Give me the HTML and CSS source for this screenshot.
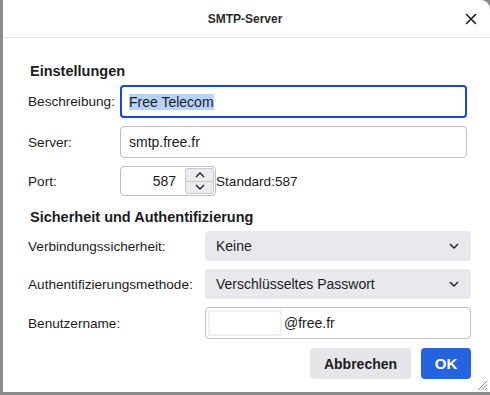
FILE: index.html
```html
<!DOCTYPE html>
<html lang="de">
<head>
    <meta charset="UTF-8">
    <meta name="viewport" content="width=device-width, initial-scale=1.0">
    <title>SMTP-Server</title>
    <link rel="stylesheet" href="styles.css">
</head>
<body>
    <div class="fenster">
        <div class="titelleiste">
            <span class="titel">SMTP-Server</span>
            <svg class="schliessen" width="12" height="12" viewBox="0 0 12 12">
                <path d="M1.5 1.5 L10.5 10.5 M10.5 1.5 L1.5 10.5" stroke="#1c1b22" stroke-width="1.6" stroke-linecap="round"/>
            </svg>
        </div>
        <div class="inhalt">
            <h2 class="abschnitt">Einstellungen</h2>
            <div class="raster raster-eins">
                <label>Beschreibung:</label>
                <div class="feld fokus"><span class="markiert">Free Telecom</span></div>
                <label>Server:</label>
                <div class="feld">smtp.free.fr</div>
                <label>Port:</label>
                <div class="port-zeile">
                    <div class="port">
                        <span class="port-wert">587</span>
                        <div class="spinner">
                            <div class="pfeil">
                                <svg width="10" height="6" viewBox="0 0 10 6"><path d="M1 5 L5 1 L9 5" fill="none" stroke="#1c1b22" stroke-width="1.3"/></svg>
                            </div>
                            <div class="pfeil">
                                <svg width="10" height="6" viewBox="0 0 10 6"><path d="M1 1 L5 5 L9 1" fill="none" stroke="#1c1b22" stroke-width="1.3"/></svg>
                            </div>
                        </div>
                    </div>
                    <span>Standard:587</span>
                </div>
            </div>

            <h2 class="abschnitt zwei">Sicherheit und Authentifizierung</h2>
            <div class="raster raster-zwei">
                <label>Verbindungssicherheit:</label>
                <div class="auswahl">
                    <span>Keine</span>
                    <svg width="10" height="6" viewBox="0 0 10 6"><path d="M1 1 L5 5 L9 1" fill="none" stroke="#1c1b22" stroke-width="1.4"/></svg>
                </div>
                <label>Authentifizierungsmethode:</label>
                <div class="auswahl">
                    <span>Verschlüsseltes Passwort</span>
                    <svg width="10" height="6" viewBox="0 0 10 6"><path d="M1 1 L5 5 L9 1" fill="none" stroke="#1c1b22" stroke-width="1.4"/></svg>
                </div>
                <label>Benutzername:</label>
                <div class="benutzer">
                    <div class="benutzer-eingabe"></div>
                    <span>@free.fr</span>
                </div>
            </div>

            <div class="knoepfe">
                <button class="knopf">Abbrechen</button>
                <button class="knopf ok">OK</button>
            </div>
        </div>
        <svg class="griff" width="11" height="11" viewBox="0 0 11 11">
            <path d="M10 1 L1 10 M10 4.5 L4.5 10 M10 8 L8 10" stroke="#8a8a8a" stroke-width="1"/>
        </svg>
    </div>
</body>
</html>
```

FILE: styles.css
```css
html, body
{
    margin: 0;
    padding: 0;
}

body
{
    width: 490px;
    height: 395px;
    background: #8c8c8c;
    font-family: "Liberation Sans", Arial, sans-serif;
    font-size: 13.6px;
    color: #1c1b22;
    overflow: hidden;
}

.fenster
{
    position: relative;
    margin-left: 3px;
    width: 487px;
    height: 392px;
    background: #ffffff;
    border-top-right-radius: 9px;
    display: flex;
    flex-direction: column;
}

.titelleiste
{
    position: relative;
    height: 37px;
    border-bottom: 1px solid #e3e3e3;
    display: flex;
    align-items: center;
    justify-content: center;
}

.titel
{
    font-size: 12px;
    font-weight: bold;
    color: #2a2a2a;
    margin-left: -3px;
}

.schliessen
{
    position: absolute;
    right: 13px;
    top: 13px;
}

.inhalt
{
    padding: 24px 19px 0 25px;
}

.abschnitt
{
    margin: 0 0 5px 2px;
    font-size: 14.5px;
    line-height: 18px;
    font-weight: bold;
}

.abschnitt.zwei
{
    margin-top: 12px;
}

.raster
{
    display: grid;
    row-gap: 8px;
    align-items: center;
}

.raster-eins
{
    grid-template-columns: 92px 1fr;
    grid-template-rows: 33px 32px 30px;
    margin-right: 4px;
}

.raster-zwei
{
    grid-template-columns: 177px 1fr;
    grid-template-rows: 30px 30px 32px;
}

.feld
{
    height: 100%;
    box-sizing: border-box;
    border: 1px solid #bdbdc2;
    border-radius: 4px;
    padding: 0 8px;
    display: flex;
    align-items: center;
    font-size: 14px;
}

.feld.fokus
{
    border: 2px solid #1747d8;
    padding: 0 7px;
}

.markiert
{
    background: #b5d3fb;
}

.port-zeile
{
    display: flex;
    align-items: center;
    height: 100%;
}

.port
{
    width: 96px;
    height: 100%;
    box-sizing: border-box;
    border: 1px solid #bdbdc2;
    border-radius: 4px;
    display: flex;
    align-items: stretch;
    font-size: 14px;
}

.port-wert
{
    flex: 1;
    text-align: right;
    padding-right: 9px;
    align-self: center;
}

.spinner
{
    width: 27px;
    margin: 1px 1px 1px 0;
    border: 1px solid #c6c6cb;
    border-radius: 3px;
    background: #ececef;
    display: flex;
    flex-direction: column;
}

.pfeil
{
    flex: 1;
    display: flex;
    align-items: center;
    justify-content: center;
}

.pfeil + .pfeil
{
    border-top: 1px solid #c6c6cb;
}

.auswahl
{
    height: 100%;
    box-sizing: border-box;
    background: #e9e9ed;
    border-radius: 4px;
    padding: 0 12px 0 11px;
    display: flex;
    align-items: center;
    justify-content: space-between;
    font-size: 14px;
}

.benutzer
{
    height: 100%;
    box-sizing: border-box;
    border: 1px solid #bdbdc2;
    border-radius: 4px;
    display: flex;
    align-items: center;
    padding: 2px;
    font-size: 14px;
}

.benutzer-eingabe
{
    width: 74px;
    height: 100%;
    box-sizing: border-box;
    border: 2px solid #f0f0f2;
    margin-right: 2px;
}

.knoepfe
{
    display: flex;
    justify-content: flex-end;
    gap: 10px;
    margin-top: 9px;
}

.knopf
{
    height: 31px;
    border: none;
    border-radius: 4px;
    background: #e6e6ea;
    color: #1c1b22;
    font-family: "Liberation Sans", Arial, sans-serif;
    font-size: 14px;
    font-weight: bold;
    padding: 0;
    width: 101px;
}

.knopf.ok
{
    width: 50px;
    background: #2563df;
    color: #ffffff;
    font-size: 15px;
}

.griff
{
    position: absolute;
    right: 2px;
    bottom: 1px;
}
```
